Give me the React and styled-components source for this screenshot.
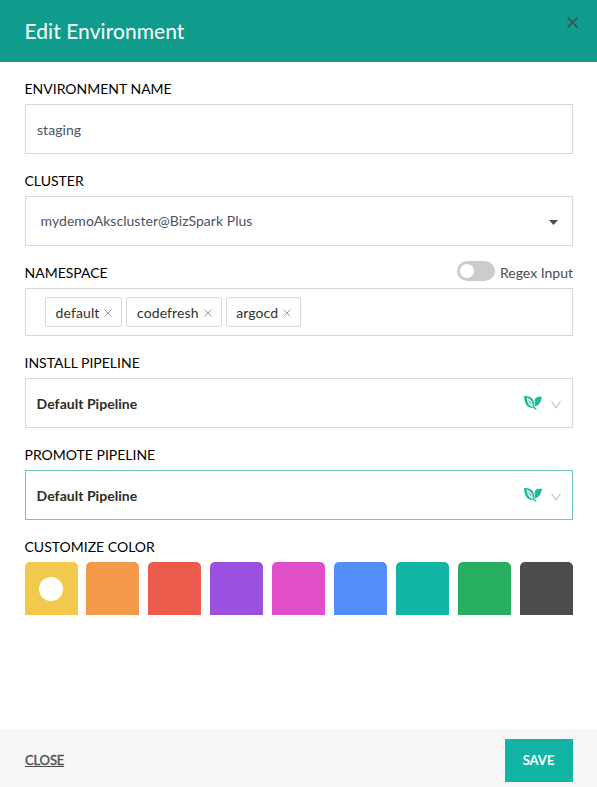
import React from "react";
import styled, { createGlobalStyle } from "styled-components";

const GlobalStyle = createGlobalStyle`
  *, *::before, *::after { box-sizing: border-box; }
  body {
    margin: 0;
    background: #fff;
    font-family: Lato, "Liberation Sans", sans-serif;
    font-size: 14px;
    line-height: 20px;
  }
`;

const Dialog = styled.form`
  display: flex;
  flex-direction: column;
  height: 787px;
`;

const Header = styled.header`
  display: flex;
  flex: none;
  justify-content: space-between;
  align-items: flex-start;
  height: 62px;
  padding: 16px 19px 0 24.5px;
  background: #109c8c;
`;

const Title = styled.h1`
  margin: 0;
  color: #fff;
  font-size: 21px;
  font-weight: 400;
  line-height: 30px;
  letter-spacing: 0.06px;
`;

const IconButton = styled.button`
  display: flex;
  margin-top: 1px;
  padding: 0;
  border: 0;
  background: none;
  cursor: pointer;
`;

const Body = styled.main`
  flex: 1;
  padding: 0 24px 0 25px;
`;

const Field = styled.section``;

const LabelRow = styled.div`
  display: flex;
  justify-content: space-between;
  height: 42px;
  padding-top: 17px;
`;

const Label = styled.label`
  margin-left: -0.5px;
  color: #000;
  font-size: 14px;
  line-height: 20px;
`;

const Control = styled.div`
  display: flex;
  align-items: center;
  height: ${(p) => p.$height || 50}px;
  padding: 0 ${(p) => p.$right || 11}px 0 ${(p) => p.$left || 11}px;
  border: 1px solid ${(p) => (p.$focused ? "#6fc5b9" : "#d7d9d9")};
  background: #fff;
`;

const Value = styled.span`
  flex: 1;
  color: ${(p) => (p.$strong ? "#2b2b2b" : "#4a5264")};
  font-weight: ${(p) => (p.$strong ? 700 : 400)};
  line-height: 20px;
  letter-spacing: 0.04px;
  padding-top: ${(p) => p.$drop || 0}px;
`;

const ToggleLabel = styled.div`
  display: flex;
  gap: 5px;
  color: #4c4c4c;
`;

const Switch = styled.span`
  display: flex;
  width: 38px;
  height: 20px;
  margin-top: -2px;
  padding: 3px;
  border-radius: 10px;
  background: #ccc;
`;

const Knob = styled.span`
  width: 14px;
  height: 14px;
  border-radius: 50%;
  background: #fff;
`;

const Tags = styled.div`
  display: flex;
  gap: 4px;
`;

const Tag = styled.span`
  display: flex;
  align-items: center;
  gap: 5px;
  height: 30px;
  padding: 2px 9px 0 9.6px;
  border: 1px solid #d9d9d9;
  border-radius: 2px;
  color: #303030;
  letter-spacing: 0.1px;
`;

const Swatches = styled.div`
  display: flex;
  gap: 9px;
`;

const Swatch = styled.button`
  display: flex;
  flex: none;
  align-items: center;
  justify-content: center;
  width: 53px;
  height: 53px;
  padding: 0 1px 0 0;
  border: 0;
  border-radius: 5px 5px 0 0;
  background: ${(p) => p.$color};

  &:first-child { margin-right: -1px; }
`;

const Selected = styled.span`
  width: 24px;
  height: 24px;
  border-radius: 50%;
  background: #fff;
`;

const Footer = styled.footer`
  display: flex;
  flex: none;
  align-items: center;
  justify-content: space-between;
  height: 58px;
  padding: 5px 24px 0 25px;
  background: #f7f7f7;
`;

const CloseLink = styled.button`
  margin-top: -2px;
  padding: 0;
  border: 0;
  background: none;
  color: #4c4c4c;
  font: 400 13px/20px Lato, sans-serif;
  letter-spacing: -0.15px;
  -webkit-text-stroke: 0.35px #4c4c4c;
  text-decoration: underline;
`;

const SaveButton = styled.button`
  width: 68px;
  height: 43px;
  padding: 0 1px 2px 0;
  border: 0;
  background: #12b5a5;
  color: #fff;
  font: 700 13px/20px Lato, sans-serif;
`;

const Cross = ({ size, color, width }) => (
  <svg width={size} height={size} viewBox="0 0 10 10" fill="none" stroke={color} strokeWidth={width}>
    <path d="M.5 .5 9.5 9.5M9.5 .5.5 9.5" />
  </svg>
);

const Caret = () => (
  <svg width="9" height="8" viewBox="0 0 9 8" fill="#44505e">
    <path d="M0 3h9L4.5 8z" />
  </svg>
);

const PipelineIcons = styled.span`
  display: flex;
  align-items: center;
  gap: 9px;
`;

const Leaves = () => (
  <svg width="18" height="14" viewBox="0 0 18 14">
    <path fill="#1fbc9c" d="M0 0C5-.2 9.400 1.500 10 6.500c.2 2.500-.4 4-.8 5.200C4 12.500.5 9 0 0z" />
    <path fill="#1fbc9c" d="M18 .8C12.500.3 10.300 2 10.800 5.500c.1 1.800-.2 3.500-.8 5.200C15 10 17 6.500 18 .8z" />
    <path fill="none" stroke="#fff" strokeWidth="1.200" d="M3.600 2.600C5.800 3.500 7.800 6 8.300 10.300C5.800 9 3.800 6.500 3.600 2.600z" />
    <path fill="none" stroke="#1fbc9c" strokeWidth="1.300" d="M8.800 10.500 12.300 13.500" />
  </svg>
);

const Chevron = () => (
  <svg width="10" height="12" viewBox="0 0 10 12" fill="none" stroke="#bfbfbf" strokeWidth="1.100">
    <path d="M.5 4.500 5 10.800 9.500 4.500" />
  </svg>
);

const namespaces = ["default", "codefresh", "argocd"];
const colors = ["#f2c94c", "#f2994a", "#eb5a4a", "#9b51e0", "#e04ec8", "#528ef7", "#12b5a5", "#27ae60", "#4c4c4c"];

function PipelineField({ label, focused }) {
  return (
    <Field>
      <LabelRow><Label>{label}</Label></LabelRow>
      <Control $focused={focused} $left={10.6}>
        <Value $strong $drop={1}>Default Pipeline</Value>
        <PipelineIcons><Leaves /><Chevron /></PipelineIcons>
      </Control>
    </Field>
  );
}

export default function App() {
  return (
    <>
      <GlobalStyle />
      <Dialog>
        <Header>
          <Title>Edit Environment</Title>
          <IconButton type="button" aria-label="Close">
            <Cross size={11} color="#4c4c4c" width={1.5} />
          </IconButton>
        </Header>
        <Body>
          <Field>
            <LabelRow><Label>ENVIRONMENT NAME</Label></LabelRow>
            <Control><Value $drop={1}>staging</Value></Control>
          </Field>
          <Field>
            <LabelRow><Label>CLUSTER</Label></LabelRow>
            <Control $left={14.6} $right={14}>
              <Value>mydemoAkscluster@BizSpark Plus</Value>
              <Caret />
            </Control>
          </Field>
          <Field>
            <LabelRow>
              <Label>NAMESPACE</Label>
              <ToggleLabel><Switch><Knob /></Switch>Regex Input</ToggleLabel>
            </LabelRow>
            <Control $height={48} $left={19}>
              <Tags>
                {namespaces.map((name) => (
                  <Tag key={name}>{name}<Cross size={8} color="#999" width={1.2} /></Tag>
                ))}
              </Tags>
            </Control>
          </Field>
          <PipelineField label="INSTALL PIPELINE" />
          <PipelineField label="PROMOTE PIPELINE" focused />
          <Field>
            <LabelRow><Label>CUSTOMIZE COLOR</Label></LabelRow>
            <Swatches>
              {colors.map((color, i) => (
                <Swatch type="button" key={color} $color={color}>{i === 0 && <Selected />}</Swatch>
              ))}
            </Swatches>
          </Field>
        </Body>
        <Footer>
          <CloseLink type="button">CLOSE</CloseLink>
          <SaveButton type="button">SAVE</SaveButton>
        </Footer>
      </Dialog>
    </>
  );
}
